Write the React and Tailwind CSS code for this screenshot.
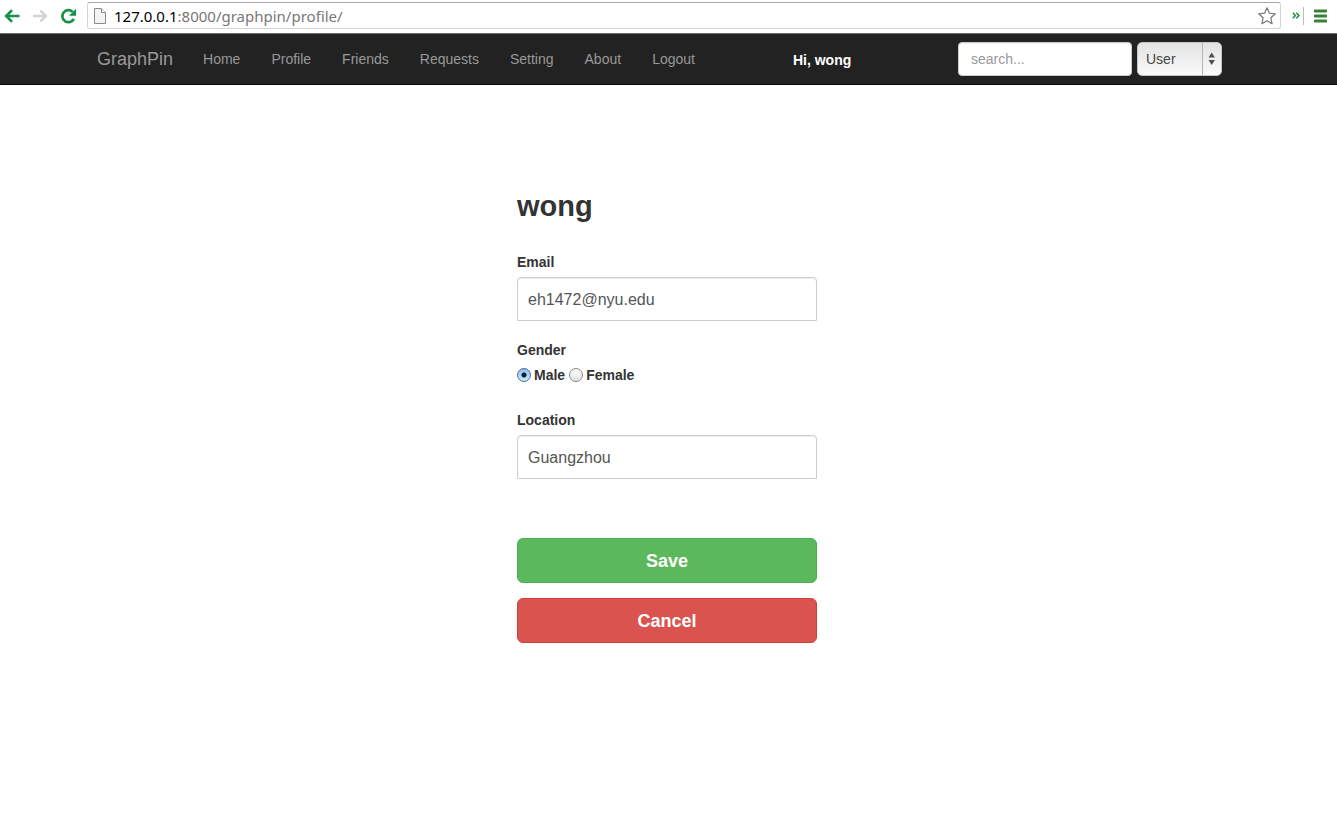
import React from "react";

const navItems = ["Home", "Profile", "Friends", "Requests", "Setting", "About", "Logout"];

function BrowserBar() {
  return (
    <header className="flex h-[34px] items-start border-b border-[#6f6f6f] bg-white pl-1 pr-[9px] pt-[2px]">
      <div className="flex h-[27px] shrink-0 items-center gap-3">
        <button type="button" aria-label="Back">
          <svg className="block h-4 w-4" viewBox="0 0 16 16" fill="none" stroke="#159149" strokeWidth="2.6">
            <path d="M15.5 8H3M8 2.2 2.2 8 8 13.8" />
          </svg>
        </button>
        <button type="button" aria-label="Forward">
          <svg className="block h-4 w-4" viewBox="0 0 16 16" fill="none" stroke="#d2d2d2" strokeWidth="2.4">
            <path d="M1 8h12.5M8.5 2.5 14 8l-5.500 5.500" />
          </svg>
        </button>
        <button type="button" aria-label="Reload">
          <svg className="block h-4 w-4" viewBox="0 0 16 16" fill="none">
            <path d="M13.800 10.800A6 6 0 1 1 12.600 3.900" stroke="#159149" strokeWidth="2.700" />
            <path d="M16 0.800v7H9z" fill="#159149" />
          </svg>
        </button>
      </div>
      <div className="ml-[11px] flex h-[27px] flex-1 items-center rounded-[3px] border border-[#d4d4d4] border-t-[#a9a9a9] pl-[6px] pr-1">
        <svg className="block h-4 w-3 shrink-0" viewBox="0 0 12 16">
          <path d="M0.500 0.500h7l4 4v11h-11z" fill="#f3f3f3" stroke="#8b8b8b" />
          <path d="M7.500 0.500v4h4" fill="#fff" stroke="#8b8b8b" />
        </svg>
        <p className="ml-2 flex-1 font-['Noto_Sans',sans-serif] text-[15px] leading-5 text-[#777]">
          <span className="text-black">127.0.0.1</span>:8000/graphpin/profile/
        </p>
        <button type="button" aria-label="Bookmark">
          <svg className="block h-[18px] w-[18px]" viewBox="0 0 18 18" fill="#fff" stroke="#777" strokeWidth="1.200" strokeLinejoin="round">
            <path d="M9 0.800 11.400 6.200 17.300 6.800 12.900 10.800 14.100 16.800 9 13.800 3.900 16.800 5.100 10.800 0.700 6.800 6.600 6.200z" />
          </svg>
        </button>
      </div>
      <div className="flex h-[27px] shrink-0 items-center">
        <button type="button" aria-label="More extensions" className="ml-[11px]">
          <svg className="block h-[7px] w-2" viewBox="0 0 8 7" fill="none" stroke="#159149" strokeWidth="1.500">
            <path d="M0.800 0.700 3.400 3.500 0.800 6.300M4.300 0.700 6.900 3.500 4.300 6.300" />
          </svg>
        </button>
        <span className="ml-[3px] h-[18px] w-px bg-[#bbb]" />
        <button type="button" aria-label="Browser menu" className="ml-[10px]">
          <svg className="block h-[14px] w-[14px]" viewBox="0 0 14 14" fill="#38803b">
            <rect y="0.500" width="13" height="3" rx="0.800" />
            <rect y="5.500" width="13" height="3" rx="0.800" />
            <rect y="10.500" width="13" height="3" rx="0.800" />
          </svg>
        </button>
      </div>
    </header>
  );
}

function NavBar() {
  return (
    <nav className="h-[51px] border-b border-[#080808] bg-[#222]">
      <div className="mx-auto flex h-[50px] max-w-[1173px] items-center pr-[33px] text-[14px] leading-5 text-[#999]">
        <a href="#" className="px-[15px] text-[18px]">GraphPin</a>
        <ul className="flex gap-px">
          {navItems.map((item) => (
            <li key={item}>
              <a href="#" className="block px-[15px]">{item}</a>
            </li>
          ))}
        </ul>
        <p className="ml-[83px] mt-[2px] font-bold text-white">Hi, wong</p>
        <form className="ml-auto flex gap-[5px]">
          <input
            type="text"
            aria-label="Search"
            placeholder="search..."
            className="h-[34px] w-[174px] rounded-[4px] border border-[#ccc] bg-white px-3 text-[#555] shadow-[inset_0_1px_1px_rgba(0,0,0,0.075)] placeholder:text-[#999] placeholder:opacity-100"
          />
          <div className="relative">
            <select
              aria-label="Search type"
              className="h-[34px] w-[85px] appearance-none rounded-[5px] border border-[#c4c4c4] bg-linear-to-b from-[#e3e3e3] to-[#fafafa] px-2 text-[#444]"
            >
              <option>User</option>
            </select>
            <svg className="pointer-events-none absolute right-0 top-0 h-[34px] w-5" viewBox="0 0 20 34">
              <path d="M0.500 1v32" stroke="#b5b5b5" />
              <path d="M6.500 15.500 9.700 10.500 12.900 15.500zM6.500 18 9.700 23 12.900 18z" fill="#505050" />
            </svg>
          </div>
        </form>
      </div>
    </nav>
  );
}

function TextField({ id, label, type, value }) {
  return (
    <div>
      <label htmlFor={id} className="mb-[5px] block text-[14px] font-bold leading-5">{label}</label>
      <input
        id={id}
        type={type}
        defaultValue={value}
        className="block h-[44px] w-full rounded-t-[4px] border border-[#ccc] bg-white px-[10px] pt-[2px] text-[16px] text-[#555] shadow-[inset_0_1px_1px_rgba(0,0,0,0.075)]"
      />
    </div>
  );
}

function GenderOption({ label, checked }) {
  return (
    <label className="flex items-center gap-[3px]">
      <input
        type="radio"
        name="gender"
        defaultChecked={checked}
        className="h-[14px] w-[14px] appearance-none rounded-full border border-[#858585] bg-linear-to-b from-white to-[#e2e2e2] checked:border-[#526b94] checked:bg-[radial-gradient(circle_at_center,#111d30_2px,transparent_3px),linear-gradient(#8fbdf0,#c5edff)]"
      />
      {label}
    </label>
  );
}

export default function App() {
  return (
    <div className="min-h-screen bg-white font-['Liberation_Sans',Arial,sans-serif] text-[#333]">
      <BrowserBar />
      <NavBar />
      <main className="pl-4 pr-[19px] pt-[105px]">
        <form className="mx-auto max-w-[300px]">
          <h2 className="mb-[29px] text-[29px] font-bold leading-[33px]">wong</h2>
          <TextField id="email" label="Email" type="email" value="eh1472@nyu.edu" />
          <fieldset className="mb-[25px] mt-[19px] text-[14px] font-bold leading-5">
            <legend className="mb-[5px]">Gender</legend>
            <div className="flex gap-1">
              <GenderOption label="Male" checked />
              <GenderOption label="Female" />
            </div>
          </fieldset>
          <TextField id="location" label="Location" type="text" value="Guangzhou" />
          <div className="mt-[59px] flex flex-col gap-[15px] text-[18px] font-bold leading-6 text-white">
            <button type="submit" className="h-[45px] rounded-[6px] border border-[#4cae4c] bg-[#5cb85c]">Save</button>
            <button type="button" className="h-[45px] rounded-[6px] border border-[#d43f3a] bg-[#d9534f]">Cancel</button>
          </div>
        </form>
      </main>
    </div>
  );
}
